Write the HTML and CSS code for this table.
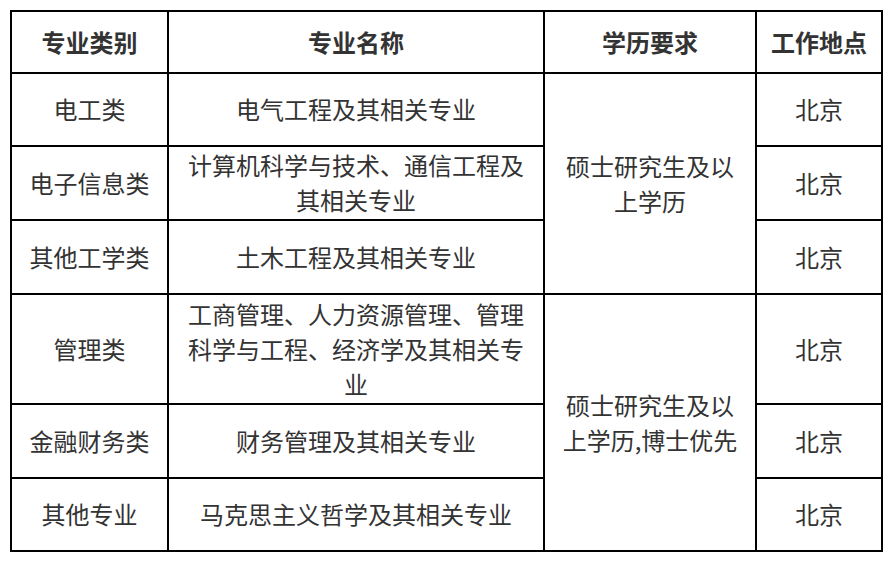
FILE: index.html
```html
<!DOCTYPE html>
<html lang="zh-CN">
<head>
<meta charset="utf-8">
<title>专业需求</title>
<link rel="stylesheet" href="styles.css">
</head>
<body>
<div class="table" role="table">
  <div class="cell head r1">专业类别</div>
  <div class="cell head r1">专业名称</div>
  <div class="cell head r1">学历要求</div>
  <div class="cell head r1">工作地点</div>

  <div class="cell r2">电工类</div>
  <div class="cell r2">电气工程及其相关专业</div>
  <div class="cell edu1">硕士研究生及以上学历</div>
  <div class="cell r2">北京</div>

  <div class="cell r3">电子信息类</div>
  <div class="cell r3">计算机科学与技术、通信工程及其相关专业</div>
  <div class="cell r3">北京</div>

  <div class="cell r4">其他工学类</div>
  <div class="cell r4">土木工程及其相关专业</div>
  <div class="cell r4">北京</div>

  <div class="cell r5">管理类</div>
  <div class="cell r5">工商管理、人力资源管理、管理科学与工程、经济学及其相关专业</div>
  <div class="cell edu2">硕士研究生及以上学历,博士优先</div>
  <div class="cell r5">北京</div>

  <div class="cell r6">金融财务类</div>
  <div class="cell r6">财务管理及其相关专业</div>
  <div class="cell r6">北京</div>

  <div class="cell r7">其他专业</div>
  <div class="cell r7">马克思主义哲学及其相关专业</div>
  <div class="cell r7">北京</div>
</div>
</body>
</html>
```
FILE: styles.css
```css
html, body {
  margin: 0;
  padding: 0;
  background: #ffffff;
}
body {
  font-family: "Noto Sans CJK SC", "Noto Sans", sans-serif;
  color: #333333;
  font-size: 24px;
  line-height: 35px;
}
.table {
  margin: 10px 0 0 10px;
  width: 873px;
  box-sizing: border-box;
  display: grid;
  grid-template-columns: 157px 376px 212px 126px;
  grid-template-rows: 62px 73px 74px 74px 110px 74px 73px;
  border-top: 2px solid #000;
  border-left: 2px solid #000;
}
.cell {
  box-sizing: border-box;
  border-right: 2px solid #000;
  border-bottom: 2px solid #000;
  display: flex;
  align-items: center;
  justify-content: center;
  text-align: center;
  padding: 0 10px 2px;
}
.head {
  font-weight: bold;
}
.edu1 {
  grid-column: 3;
  grid-row: 2 / span 3;
}
.edu2 {
  grid-column: 3;
  grid-row: 5 / span 3;
}
```
